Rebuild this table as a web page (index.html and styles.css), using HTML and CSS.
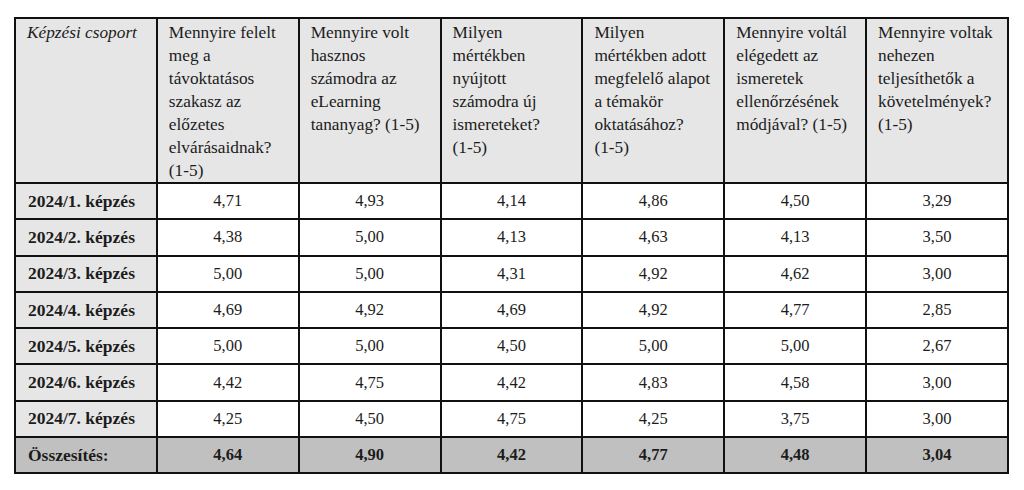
FILE: index.html
```html
<!DOCTYPE html>
<html lang="hu">
<head>
<meta charset="utf-8">
<title>Képzési csoport értékelés</title>
<link rel="stylesheet" href="styles.css">
</head>
<body>
<table class="results">
  <colgroup>
    <col class="col"><col class="col"><col class="col"><col class="col"><col class="col"><col class="col"><col class="col">
  </colgroup>
  <thead>
    <tr class="head-row">
      <th class="group-head">Képzési csoport</th>
      <th>Mennyire felelt meg a távoktatásos szakasz az előzetes elvárásaidnak? (1-&#8288;5)</th>
      <th>Mennyire volt hasznos számodra az eLearning tananyag? (1-&#8288;5)</th>
      <th>Milyen mértékben nyújtott számodra új ismereteket? (1-&#8288;5)</th>
      <th>Milyen mértékben adott megfelelő alapot a témakör oktatásához? (1-&#8288;5)</th>
      <th>Mennyire voltál elégedett az ismeretek ellenőrzésének módjával? (1-&#8288;5)</th>
      <th>Mennyire voltak nehezen teljesíthetők a követelmények? (1-&#8288;5)</th>
    </tr>
  </thead>
  <tbody>
    <tr><th class="label">2024/1. képzés</th><td>4,71</td><td>4,93</td><td>4,14</td><td>4,86</td><td>4,50</td><td>3,29</td></tr>
    <tr><th class="label">2024/2. képzés</th><td>4,38</td><td>5,00</td><td>4,13</td><td>4,63</td><td>4,13</td><td>3,50</td></tr>
    <tr><th class="label">2024/3. képzés</th><td>5,00</td><td>5,00</td><td>4,31</td><td>4,92</td><td>4,62</td><td>3,00</td></tr>
    <tr><th class="label">2024/4. képzés</th><td>4,69</td><td>4,92</td><td>4,69</td><td>4,92</td><td>4,77</td><td>2,85</td></tr>
    <tr><th class="label">2024/5. képzés</th><td>5,00</td><td>5,00</td><td>4,50</td><td>5,00</td><td>5,00</td><td>2,67</td></tr>
    <tr><th class="label">2024/6. képzés</th><td>4,42</td><td>4,75</td><td>4,42</td><td>4,83</td><td>4,58</td><td>3,00</td></tr>
    <tr><th class="label">2024/7. képzés</th><td>4,25</td><td>4,50</td><td>4,75</td><td>4,25</td><td>3,75</td><td>3,00</td></tr>
  </tbody>
  <tfoot>
    <tr class="total-row"><th class="label">Összesítés:</th><td>4,64</td><td>4,90</td><td>4,42</td><td>4,77</td><td>4,48</td><td>3,04</td></tr>
  </tfoot>
</table>
</body>
</html>
```
FILE: styles.css
```css
html, body {
  background: #ffffff;
}
body {
  margin: 0;
  padding: 17px 0 0 14px;
  font-family: "Liberation Serif", "Times New Roman", serif;
  color: #1c1c1c;
}
.results {
  width: 995px;
  table-layout: fixed;
  border-collapse: collapse;
  border: 2px solid #111;
}
.results th,
.results td {
  border: 2px solid #111;
}
.head-row th {
  background: #e6e6e6;
  font-weight: normal;
  font-size: 17.3px;
  line-height: 23px;
  text-align: left;
  vertical-align: top;
  padding: 2px 8px 0 11px;
  height: 150px;
}
.head-row .group-head {
  font-style: italic;
}
.results tbody td,
.results tfoot td {
  font-size: 16.5px;
  text-align: center;
  vertical-align: middle;
  height: 32.3px;
  padding: 1px 4px;
}
.label {
  background: #e6e6e6;
  font-weight: bold;
  font-size: 17.5px;
  text-align: left;
  padding: 1px 4px 1px 12px;
}
.total-row th,
.total-row td {
  background: #c0c0c0;
  font-weight: bold;
}
```
